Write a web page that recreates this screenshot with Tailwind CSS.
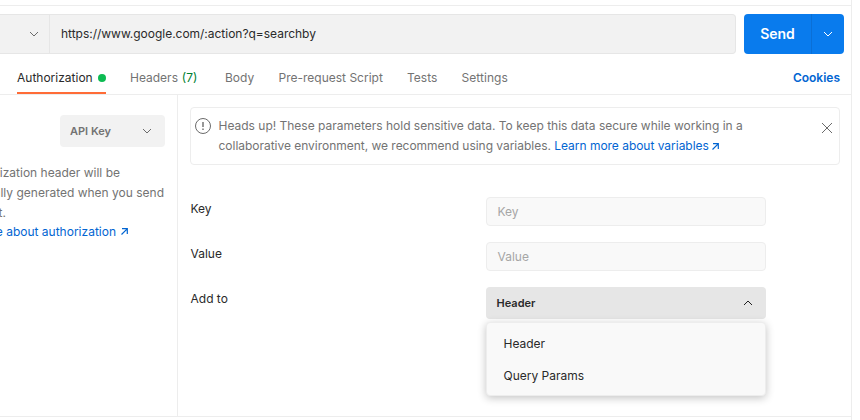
<!DOCTYPE html>
<html lang="en">
<head>
<meta charset="utf-8">
<title>Request</title>
<script src="https://cdn.jsdelivr.net/npm/@tailwindcss/browser@4"></script>
</head>
<body class="h-[420px] w-[860px] overflow-hidden bg-white font-[Inter,sans-serif] text-[12px] leading-5 text-[#2a2a2a]">
<div class="flex h-[420px] w-[852px] flex-col overflow-hidden border-r border-[#ededed]">
  <div class="h-[6px] shrink-0 border-b border-[#ededed]"></div>

  <!-- URL bar -->
  <div class="mt-2 flex h-10 shrink-0 gap-2 pr-[7px]">
    <div class="flex flex-1 rounded-r border border-l-0 border-[#e6e6e6] bg-[#f2f2f2]">
      <div class="flex w-[50px] items-center justify-end border-r border-[#e6e6e6] pr-[10px]">
        <svg class="size-[10px]" viewBox="0 0 10 10" fill="none" stroke="#6b6b6b"><path d="M1 3l4 4 4-4"/></svg>
      </div>
      <div class="flex items-center pl-[11px] tracking-[-0.02px]">https://www.google.com/:action?q=searchby</div>
    </div>
    <div class="flex w-[100px] overflow-hidden rounded bg-[#097bed] text-white">
      <div class="flex w-[67px] items-center justify-center text-[14px] font-semibold">Send</div>
      <div class="flex flex-1 items-center justify-center border-l border-[#0a6fd6]">
        <svg class="size-[10px]" viewBox="0 0 10 10" fill="none" stroke="#fff"><path d="M1 3l4 4 4-4"/></svg>
      </div>
    </div>
  </div>

  <!-- Tabs -->
  <div class="flex h-[41px] shrink-0 border-b border-[#ededed] pr-[11px] pl-[17px] text-[#737373]">
    <div class="flex w-[89px] items-center justify-between border-b-2 border-[#ff6c37] pt-[9px] text-[#2a2a2a]"><span>Authorization</span><span class="size-2 rounded-full bg-[#0cbb52]"></span></div>
    <div class="ml-6 w-[71px] pt-[14px]">Headers <span class="ml-[0.5px] text-[#007f31]">(7)</span></div>
    <div class="ml-6 w-[30px] pt-[14px]">Body</div>
    <div class="ml-[23.5px] w-[105px] pt-[14px]">Pre-request Script</div>
    <div class="ml-[23.5px] w-[30px] pt-[14px]">Tests</div>
    <div class="ml-[24.5px] pt-[14px] tracking-[0.05px]">Settings</div>
    <div class="ml-auto pt-[14px] font-semibold text-[#0265d2]">Cookies</div>
  </div>

  <!-- Body -->
  <div class="flex h-[322px] shrink-0 border-b border-[#ededed]">
    <aside class="w-[178px] shrink-0 overflow-hidden border-r border-[#ededed] pt-5 text-[#737373]">
      <div class="ml-[60px] flex h-8 w-[105px] items-center justify-between rounded bg-[#f2f2f2] pr-[13px] pl-[10px] text-[11px] font-semibold">API Key
        <svg class="size-[10px]" viewBox="0 0 10 10" fill="none" stroke="#6b6b6b"><path d="M1 3l4 4 4-4"/></svg>
      </div>
      <div class="mt-4 flex w-[164px] flex-col whitespace-nowrap">
        <span class="-ml-20 flex w-[200px] justify-end">The authorization header will be</span>
        <span class="-ml-20 flex w-[244px] justify-end">automatically generated when you send</span>
        <span class="-ml-20 flex w-[86px] justify-end">the request.</span>
        <span class="-mt-px -ml-20 flex w-[208px] items-center justify-end text-[#0265d2]">Learn more about authorization
          <svg class="mb-px ml-[5px] size-[7px] shrink-0" viewBox="0 0 7 7" fill="none" stroke="#0265d2" stroke-width="1.2"><path d="M.5 6.5l5.7-5.7M1 .7h5.3V6"/></svg>
        </span>
      </div>
    </aside>

    <main class="flex-1 pt-3 pr-[11px] pl-3">
      <div class="flex h-[58px] rounded border border-[#ededed] pt-2 pr-[6px] pl-1 text-[#737373]">
        <svg class="mt-0.5 size-4 shrink-0" viewBox="0 0 16 16" fill="none" stroke="#6b6b6b"><circle cx="8" cy="8" r="7.5"/><path stroke-width="1.4" d="M8 4v5M8 10.5V12"/></svg>
        <div class="ml-[7.5px] flex-1 whitespace-nowrap"><span class="tracking-[-0.006px]">Heads up! These parameters hold sensitive data. To keep this data secure while working in a</span><br><span class="tracking-[-0.025px]">collaborative environment, we recommend using variables. <span class="text-[#0265d2]">Learn more about variables <svg class="inline size-[7px] align-[0.5px]" viewBox="0 0 7 7" fill="none" stroke="#0265d2" stroke-width="1.2"><path d="M.5 6.5l5.7-5.7M1 .7h5.3V6"/></svg></span></span></div>
        <svg class="mt-[6px] size-3 shrink-0" viewBox="0 0 12 12" fill="none" stroke="#6b6b6b"><path d="M1 1l10 10M11 1L1 11"/></svg>
      </div>
      <div class="mt-8 flex h-[29px]">
        <span class="w-[296px] pt-0.5 pl-[0.5px]">Key</span>
        <div class="flex w-[280px] items-center rounded border border-[#ededed] bg-[#f9f9f9] pl-[10.5px] text-[#a6a6a6]">Key</div>
      </div>
      <div class="mt-4 flex h-[29px]">
        <span class="w-[296px] pt-0.5 pl-[0.5px]">Value</span>
        <div class="flex w-[280px] items-center rounded border border-[#ededed] bg-[#f9f9f9] pl-[10.5px] text-[#a6a6a6]">Value</div>
      </div>
      <div class="mt-4 flex">
        <span class="w-[296px] pt-0.5 pl-[0.5px]">Add to</span>
        <div class="w-[280px]">
          <div class="flex h-8 items-center justify-between rounded bg-[#e6e6e6] pr-[13px] pl-[10.5px] text-[11px] font-semibold">Header
            <svg class="size-[10px]" viewBox="0 0 10 10" fill="none" stroke="#212121"><path d="M1 7l4-4 4 4"/></svg>
          </div>
          <div class="mt-[3px] h-[74px] rounded border border-[#ededed] bg-[#f9f9f9] pt-[5px] pl-[16.5px] leading-8 shadow-[0_2px_8px_rgba(0,0,0,0.24)]">
            <div>Header</div>
            <div>Query Params</div>
          </div>
        </div>
      </div>
    </main>
  </div>
</div>
</body>
</html>
